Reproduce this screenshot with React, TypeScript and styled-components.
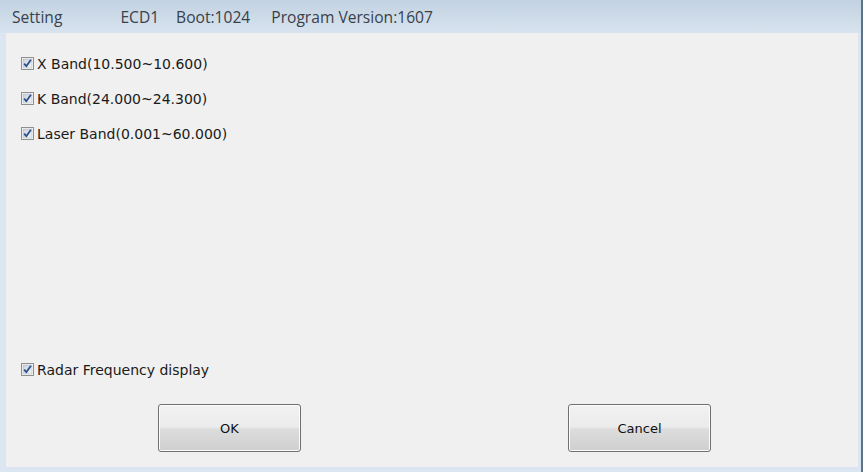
import React, { useState } from 'react';
import styled, { createGlobalStyle } from 'styled-components';

const GlobalStyle = createGlobalStyle`
    html, body {
        margin: 0;
        padding: 0;
        background: #dae5f1;
    }
`;

const Window = styled.div`
    width: 863px;
    height: 472px;
    box-sizing: border-box;
    display: flex;
    flex-direction: column;
    background: #dbe6f2;
    border-right: 2px solid #5c7386;
    padding: 0 3px 5px 6px;
    font-family: "DejaVu Sans", "Liberation Sans", sans-serif;
    color: #1a1a1a;
    overflow: hidden;
`;

const TitleBar = styled.div`
    height: 33px;
    margin: 0 -3px 0 -6px;
    padding-left: 12px;
    display: flex;
    align-items: center;
    font-family: "Open Sans", "Liberation Sans", sans-serif;
    font-size: 15.6px;
    color: #39414b;
    background: linear-gradient(to bottom, #c3d2e2 0%, #cddbe8 50%, #d8e3ef 100%);
`;

const TitleItem = styled.span<{ $gap?: number }>`
    margin-left: ${(p) => p.$gap ?? 0}px;
    white-space: nowrap;
`;

const Panel = styled.div`
    flex: 1;
    display: flex;
    flex-direction: column;
    background: #f0f0f0;
    padding: 13px 0 15px 15px;
`;

const Row = styled.label`
    height: 35px;
    display: flex;
    align-items: center;
    gap: 3px;
    font-size: 14px;
    cursor: default;
`;

const Spacer = styled.div`
    flex: 1;
`;

const ButtonRow = styled.div`
    display: flex;
    padding-left: 137px;
    gap: 267px;
    margin-top: 17px;
`;

const Button = styled.button`
    width: 143px;
    height: 48px;
    box-sizing: border-box;
    border: 1px solid #707070;
    border-radius: 3px;
    background: linear-gradient(to bottom, #f2f2f2 0%, #ebebeb 48%, #dddddd 52%, #cfcfcf 100%);
    box-shadow: inset 0 0 0 1px #fcfcfc;
    font-family: "DejaVu Sans", "Liberation Sans", sans-serif;
    font-size: 13px;
    color: #111;
    padding: 0;
`;

const Box = styled.span`
    width: 13px;
    height: 13px;
    flex: none;
    display: inline-flex;
`;

const CheckBox = ({ checked }: { checked: boolean }) => (
    <Box>
        <svg width="13" height="13" viewBox="0 0 13 13">
            <defs>
                <linearGradient id="cbFill" x1="0" y1="0" x2="1" y2="1">
                    <stop offset="0" stopColor="#c9d0d9" />
                    <stop offset="1" stopColor="#f6f7f8" />
                </linearGradient>
            </defs>
            <rect x="0.5" y="0.5" width="12" height="12" fill="#fff" stroke="#8e8f8f" />
            <rect x="2" y="2" width="9" height="9" fill="url(#cbFill)" stroke="#aeb3b9" strokeWidth="0.6" />
            {checked && (
                <path d="M3.2 6.6 L5.3 9.2 L9.9 2.8" fill="none" stroke="#2c4f8f" strokeWidth="1.8" strokeLinejoin="round" />
            )}
        </svg>
    </Box>
);

const bands = [
    'X Band(10.500~10.600)',
    'K Band(24.000~24.300)',
    'Laser Band(0.001~60.000)',
];

const App = () => {
    const [checked] = useState([true, true, true]);

    return (
        <>
            <GlobalStyle />
            <Window>
                <TitleBar>
                    <TitleItem>Setting</TitleItem>
                    <TitleItem $gap={58}>ECD1</TitleItem>
                    <TitleItem $gap={17}>Boot:1024</TitleItem>
                    <TitleItem $gap={21}>Program Version:1607</TitleItem>
                </TitleBar>
                <Panel>
                    {bands.map((b, i) => (
                        <Row key={b}>
                            <CheckBox checked={checked[i]} />
                            {b}
                        </Row>
                    ))}
                    <Spacer />
                    <Row>
                        <CheckBox checked />
                        Radar Frequency display
                    </Row>
                    <ButtonRow>
                        <Button>OK</Button>
                        <Button>Cancel</Button>
                    </ButtonRow>
                </Panel>
            </Window>
        </>
    );
};

export default App;
